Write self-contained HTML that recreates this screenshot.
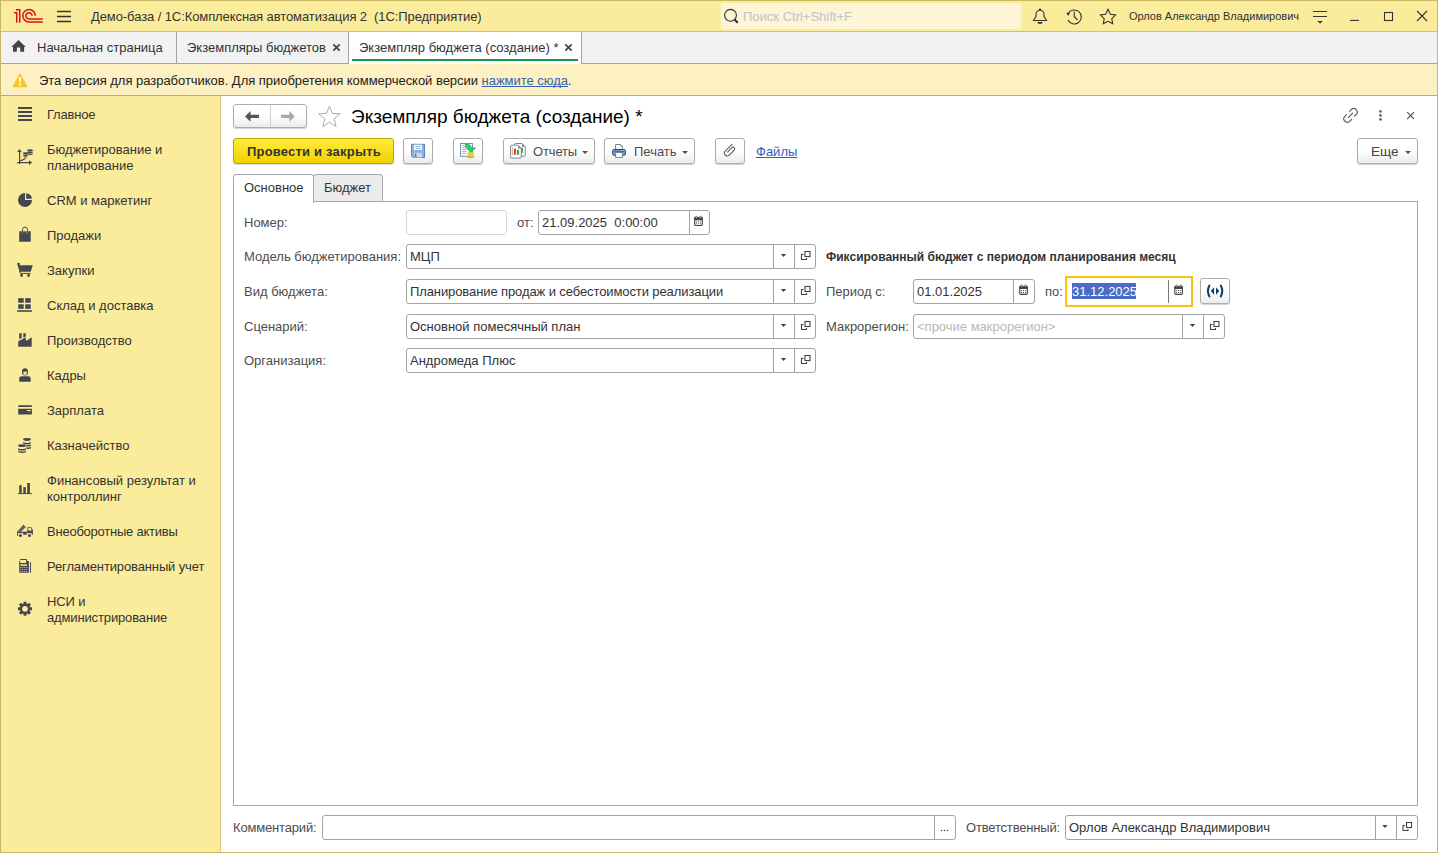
<!DOCTYPE html>
<html><head><meta charset="utf-8">
<style>
*{box-sizing:border-box;margin:0;padding:0}
html,body{width:1438px;height:853px;overflow:hidden;background:#fff;font-family:"Liberation Sans",sans-serif;font-size:13px;color:#333}
.a{position:absolute}
.t{position:absolute;white-space:nowrap;line-height:16px}
svg{position:absolute;overflow:visible}
#title{left:0;top:0;width:1438px;height:32px;background:#fbec9c;border-top:1px solid #c9b864;border-bottom:1px solid #d3c172}
#tabs{left:0;top:32px;width:1438px;height:32px;background:#f2f2f2;border-bottom:1px solid #a3a3a3}
#banner{left:0;top:64px;width:1438px;height:32px;background:#fdf1c3;border-bottom:1px solid #a9a9a9}
#side{left:0;top:96px;width:221px;height:757px;background:#fbec9c;border-right:1px solid #d8c878}
#wb{left:0;top:0;width:1438px;height:853px;border-left:1px solid #c7b766;border-right:1px solid #c7b766;border-bottom:1px solid #c7b766;pointer-events:none}
.si{position:absolute;left:47px;font-size:13px;color:#333;line-height:16px;white-space:nowrap}
.btn{position:absolute;border:1px solid #adadad;border-radius:3px;background:linear-gradient(#fff 0%,#fff 45%,#ececec 100%);box-shadow:0 1px 1px rgba(0,0,0,.18)}
.inp{position:absolute;border:1px solid #a3a3a3;border-radius:3px;background:#fff;height:25px}
.lbl{position:absolute;color:#4d4d4d;white-space:nowrap;line-height:16px}
.val{position:absolute;color:#333;white-space:nowrap;line-height:16px}
.t,.si,.lbl,.val{margin-top:1px}
#tabs .t{margin-top:0}
.sep{position:absolute;top:0;bottom:0;width:1px;background:#a3a3a3}
</style></head><body>

<!-- Title bar -->
<div id="title" class="a">
  <svg style="left:0;top:-1px" width="80" height="32" viewBox="0 0 80 32">
    <g fill="none" stroke="#d4141e" stroke-width="1.5">
      <path d="M14,12.75 H16.75 V22.75"/>
      <path d="M16,9.75 H19.75 V22.75"/>
      <path d="M35.3,15.8 A6.25,6.25 0 1 0 29,22 H42.8"/>
      <path d="M32.1,15.8 A3.1,3.1 0 1 0 29,18.9 H42.8"/>
    </g>
    <g stroke="#333" stroke-width="1.3">
      <path d="M57,11.5 H71 M57,16.5 H71 M57,21.5 H71"/>
    </g>
  </svg>
  <div class="t" style="left:91px;top:7px;color:#333;letter-spacing:-0.09px">Демо-база / 1С:Комплексная автоматизация 2&nbsp; (1С:Предприятие)</div>
  <div class="a" style="left:721px;top:2px;width:300px;height:26px;background:#fdf5d6;border-radius:2px"></div>
  <svg style="left:0;top:-1px" width="1438" height="32" viewBox="0 0 1438 32">
    <circle cx="730.5" cy="15.3" r="5.9" fill="none" stroke="#333" stroke-width="1.1"/>
    <path d="M734.6,19.5 L737.8,22.8" stroke="#333" stroke-width="2.2"/>
    <!-- bell -->
    <g fill="none" stroke="#333" stroke-width="1.1">
      <path d="M1033.5,20.5 H1046.5 L1044,16.5 V14.5 A4,4.3 0 0 0 1036,14.5 V16.5 Z"/>
    </g>
    <circle cx="1040" cy="9.6" r="1" fill="#333"/>
    <path d="M1037.4,22.1 H1042.6 A2.6,2 0 0 1 1037.4,22.1 Z" fill="#333"/>
    <!-- history -->
    <g fill="none" stroke="#333" stroke-width="1.1">
      <path d="M1068.2,13.5 A7,7 0 1 1 1068,20"/>
      <path d="M1074.2,11.5 V16.5 L1077.5,20"/>
    </g>
    <path d="M1066.2,12.8 L1070,12.6 L1068.3,16 Z" fill="#333"/>
    <!-- star -->
    <path d="M1108,9.3 L1110.4,14.2 L1115.6,14.9 L1111.8,18.6 L1112.7,23.8 L1108,21.3 L1103.3,23.8 L1104.2,18.6 L1100.4,14.9 L1105.6,14.2 Z" fill="none" stroke="#333" stroke-width="1.1" stroke-linejoin="miter"/>
    <!-- filter -->
    <path d="M1313,11.5 H1327 M1313,16.5 H1327" stroke="#333" stroke-width="1.1"/>
    <path d="M1317.2,21 H1323 L1320.1,23.6 Z" fill="#333"/>
    <!-- min max close -->
    <path d="M1350,20.4 H1359" stroke="#333" stroke-width="1.1"/>
    <rect x="1384.5" y="12.5" width="8" height="8" fill="none" stroke="#333" stroke-width="1.1"/>
    <path d="M1417,11 L1427,21 M1427,11 L1417,21" stroke="#333" stroke-width="1.1"/>
  </svg>
  <div class="t" style="left:743px;top:7px;color:#c2c2ca">Поиск Ctrl+Shift+F</div>
  <div class="t" style="left:1129px;top:6px;font-size:11px;color:#333">Орлов Александр Владимирович</div>
</div>

<!-- Tabs -->
<div id="tabs" class="a">
  <svg style="left:0;top:0" width="30" height="32" viewBox="0 32 30 32">
    <path d="M18.5,40 L11.3,47 H13 V51.8 H16.9 V47.5 H20.2 V51.8 H24.1 V47 H25.8 Z" fill="#444"/>
  </svg>
  <div class="t" style="left:37px;top:8px;color:#333">Начальная страница</div>
  <div class="a" style="left:176px;top:0;width:1px;height:31px;background:#a3a3a3"></div>
  <div class="t" style="left:187px;top:8px;color:#333">Экземпляры бюджетов</div>
  <svg style="left:0;top:0" width="600" height="32" viewBox="0 32 600 32">
    <path d="M333.3,44.3 L339.7,50.7 M339.7,44.3 L333.3,50.7" stroke="#444" stroke-width="1.7"/>
  </svg>
  <div class="a" style="left:348px;top:0;width:234px;height:32px;background:#fff;border-left:1px solid #a3a3a3;border-right:1px solid #a3a3a3"></div>
  <div class="t" style="left:359px;top:8px;color:#333">Экземпляр бюджета (создание) *</div>
  <svg style="left:0;top:0" width="600" height="32" viewBox="0 32 600 32">
    <path d="M565.3,44.3 L571.7,50.7 M571.7,44.3 L565.3,50.7" stroke="#444" stroke-width="1.7"/>
  </svg>
  <div class="a" style="left:352px;top:27px;width:226px;height:2px;background:#169a3c"></div>
</div>

<!-- Banner -->
<div id="banner" class="a">
  <svg style="left:0;top:0" width="40" height="32" viewBox="0 64 40 32">
    <path d="M20,73.2 L27.2,87 H12.8 Z" fill="#f6c623" stroke="#f6c623" stroke-width="0.6" stroke-linejoin="round"/>
    <rect x="19.1" y="77" width="1.8" height="5.3" fill="#fff"/>
    <rect x="19.1" y="83.5" width="1.8" height="1.8" fill="#fff"/>
  </svg>
  <div class="t" style="left:39px;top:8px;color:#222;letter-spacing:-0.03px">Эта версия для разработчиков. Для приобретения коммерческой версии <span style="color:#3462b4;text-decoration:underline;text-decoration-skip-ink:none">нажмите сюда</span>.</div>
</div>

<!-- Sidebar -->
<div id="side" class="a">
  <div class="si" style="top:10px;letter-spacing:-0.2px">Главное</div>
  <div class="si" style="top:45px">Бюджетирование и<br>планирование</div>
  <div class="si" style="top:96px">CRM и маркетинг</div>
  <div class="si" style="top:131px">Продажи</div>
  <div class="si" style="top:166px">Закупки</div>
  <div class="si" style="top:201px">Склад и доставка</div>
  <div class="si" style="top:236px">Производство</div>
  <div class="si" style="top:271px">Кадры</div>
  <div class="si" style="top:306px">Зарплата</div>
  <div class="si" style="top:341px">Казначейство</div>
  <div class="si" style="top:376px">Финансовый результат и<br>контроллинг</div>
  <div class="si" style="top:427px;letter-spacing:-0.23px">Внеоборотные активы</div>
  <div class="si" style="top:462px;letter-spacing:-0.13px">Регламентированный учет</div>
  <div class="si" style="top:497px;letter-spacing:-0.14px">НСИ и<br>администрирование</div>
</div>
<svg style="left:0;top:0" width="221" height="853" viewBox="0 0 221 853">
<g fill="#454750">
  <!-- Главное -->
  <rect x="18" y="107" width="14" height="2"/><rect x="18" y="111" width="14" height="2"/><rect x="18" y="115" width="14" height="2"/><rect x="18" y="119" width="14" height="2"/>
  <!-- budget -->
  <path d="M19.5,149 L17.2,152 H21.8 Z"/><rect x="19" y="151" width="1.2" height="13"/>
  <rect x="17" y="162" width="12.5" height="1.2"/><path d="M29,160.2 L32.2,162.6 L29,165 Z"/>
  <path d="M20.3,161 L21.3,160.4 H22 L23,159.5 H23.8 L24.6,158.7 H25.9" fill="none" stroke="#454750" stroke-width="1.1"/>
  <ellipse cx="25.5" cy="153.3" rx="2.7" ry="1.1"/><ellipse cx="25.5" cy="155.3" rx="2.7" ry="0.8"/><ellipse cx="25.5" cy="156.8" rx="2.3" ry="0.6"/>
  <ellipse cx="30" cy="150.4" rx="3" ry="1.1"/><ellipse cx="30" cy="152.4" rx="3" ry="0.8"/><ellipse cx="30" cy="154.3" rx="3" ry="0.8"/>
  <!-- CRM pie -->
  <path d="M25,193 V200 H32 A7,7 0 1 1 25,193 Z"/>
  <path d="M26.1,193.2 A5.8,5.8 0 0 1 31.9,198.8 H26.1 Z"/>
  <!-- bag -->
  <path d="M19.2,231.2 H21.8 V233.2 H23.2 V231.2 H26.4 V233.2 H27.8 V231.2 H30.7 V241.7 H19.2 Z"/>
  <path d="M22.5,233 V229.4 A2.45,2.3 0 0 1 27.4,229.4 V233" fill="none" stroke="#454750" stroke-width="1"/>
  <!-- cart -->
  <path d="M17,263 H19.8 V265.3 H32.8 L30.7,271.7 H19.5 Z"/>
  <path d="M19.7,271 L20.3,273.4 H30.7" fill="none" stroke="#454750" stroke-width="1"/>
  <circle cx="21.6" cy="275.5" r="1.4"/><circle cx="28.6" cy="275.5" r="1.4"/>
  <!-- warehouse -->
  <rect x="18.2" y="298.2" width="5.5" height="4.5"/><rect x="25.2" y="298.2" width="5.5" height="4.5"/>
  <rect x="18.2" y="304.3" width="5.5" height="4.5"/><rect x="25.2" y="304.3" width="5.5" height="4.5"/>
  <rect x="17.1" y="310.2" width="14.8" height="1.6"/>
  <!-- factory -->
  <path d="M19.2,333.2 H21.7 V338 L19.2,339 Z"/><path d="M23.3,333.2 H25.8 V336.4 L23.3,337.5 Z"/>
  <path d="M18.2,341.2 L25.7,337.3 L26.1,341 L31.7,337.2 V346.7 H18.2 Z"/>
  <!-- person -->
  <path d="M22.1,371.5 A2.9,3.3 0 0 1 27.9,371.5 V373 A2.9,2.5 0 0 1 22.1,373 Z"/>
  <path d="M19.2,381.7 V378.2 A2.5,2 0 0 1 21.5,376.2 H28.4 A2.5,2 0 0 1 30.7,378.2 V381.7 Z"/>
  <!-- card -->
  <rect x="18.2" y="405.2" width="13.7" height="1.8" rx="0.6"/>
  <path d="M18.2,408.8 H31.9 V414 A0.6,0.6 0 0 1 31.3,414.6 H18.8 A0.6,0.6 0 0 1 18.2,414 Z"/>
  <!-- coins -->
  <ellipse cx="27" cy="439.5" rx="3.9" ry="1.4"/><path d="M23.1,441.6 A3.9,1.3 0 0 0 30.9,441.6 V443 A3.9,1.3 0 0 1 23.1,443 Z"/>
  <path d="M26.3,444.8 A3.9,1.3 0 0 0 30.9,444.6 V446 A3.9,1.3 0 0 1 26.3,446.3 Z"/><path d="M26.3,447.3 A3.9,1.3 0 0 0 30.9,447.1 V448.5 A3.9,1.3 0 0 1 26.3,448.8 Z"/>
  <ellipse cx="22" cy="445.7" rx="3.95" ry="1.4"/><path d="M18,447.8 A3.95,1.3 0 0 0 26,447.8 V449.2 A3.95,1.3 0 0 1 18,449.2 Z"/>
  <path d="M18,450.3 A3.95,1.3 0 0 0 26,450.3 V451.6 A3.95,1.3 0 0 1 18,451.6 Z"/>
  <!-- chart -->
  <rect x="19.2" y="485.2" width="2.5" height="8.3"/><rect x="23.3" y="487.1" width="2.5" height="6.4"/><rect x="27.2" y="483" width="2.7" height="10.5"/>
  <rect x="18" y="493.1" width="13.9" height="1"/>
  <!-- truck -->
  <path d="M17.35,531.4 L23.55,524.5 L25.8,527.3 L20.45,532 Z" opacity="0.85"/>
  <path d="M27.35,527.2 H31.4 L32.85,530 V533.1 H27.35 Z"/>
  <path d="M28.3,528.1 H30.9 L31.8,530.6 H28.3 Z" fill="#fbec9c"/>
  <rect x="17.2" y="531.7" width="15.65" height="1.4"/>
  <rect x="23.3" y="533" width="3.35" height="1.8"/>
  <rect x="31.6" y="533" width="1.25" height="1.8"/>
  <rect x="17.2" y="531.4" width="0.9" height="4.5"/>
  <circle cx="20.45" cy="535.6" r="1.5"/><circle cx="29.45" cy="535.6" r="1.5"/>
  <!-- calc -->
  <path d="M19.2,561 H20.2 V559 H26.9 V561 H28.9 V572.7 H19.2 Z"/>
  <rect x="30" y="562.2" width="1" height="10.5"/>
  <!-- gear -->
  <path d="M23.43,603.74 L23.57,601.74 L26.43,601.74 L26.57,603.74 L27.47,604.11 L28.98,602.80 L31.00,604.82 L29.69,606.33 L30.06,607.23 L32.06,607.37 L32.06,610.23 L30.06,610.37 L29.69,611.27 L31.00,612.78 L28.98,614.80 L27.47,613.49 L26.57,613.86 L26.43,615.86 L23.57,615.86 L23.43,613.86 L22.53,613.49 L21.02,614.80 L19.00,612.78 L20.31,611.27 L19.94,610.37 L17.94,610.23 L17.94,607.37 L19.94,607.23 L20.31,606.33 L19.00,604.82 L21.02,602.80 L22.53,604.11 Z"/>
</g>
<g fill="#fbec9c">
  <path d="M20.2,560 H26 V563 H20.2 Z" fill="#fbec9c"/>
  <rect x="20.3" y="564.3" width="6.6" height="1.5"/>
  <circle cx="20.8" cy="567.5" r="0.55"/><circle cx="22.8" cy="567.5" r="0.55"/><circle cx="24.8" cy="567.5" r="0.55"/><circle cx="26.8" cy="567.5" r="0.55"/>
  <circle cx="20.8" cy="569.5" r="0.55"/><circle cx="22.8" cy="569.5" r="0.55"/><circle cx="24.8" cy="569.5" r="0.55"/><circle cx="26.8" cy="569.5" r="0.55"/>
  <circle cx="20.8" cy="571.5" r="0.55"/><circle cx="22.8" cy="571.5" r="0.55"/><circle cx="24.8" cy="571.5" r="0.55"/><circle cx="26.8" cy="571.5" r="0.55"/>
  <circle cx="25" cy="608.8" r="2.9"/>
  <rect x="26.9" y="410" width="4" height="1.1"/>
  <path d="M23.2,373 A1.8,2 0 0 0 26.8,373 V371.8 Q25,371 23.2,372.4 Z"/>
</g>
</svg>


<!-- nav buttons -->
<div class="btn" style="left:233px;top:104px;width:74px;height:24px"></div>
<div class="a" style="left:270px;top:105px;width:1px;height:22px;background:#d0d0d0"></div>
<svg style="left:0;top:0" width="1438" height="853" viewBox="0 0 1438 853">
  <path d="M245,116.4 L250.5,111 V114.8 H259 V118 H250.5 V121.8 Z" fill="#555"/>
  <path d="M294.8,116.4 L289.3,111 V114.8 H281 V118 H289.3 V121.8 Z" fill="#aaa"/>
  <path d="M329.45,106.00 L332.33,113.34 L340.20,113.81 L334.11,118.81 L336.09,126.44 L329.45,122.20 L322.81,126.44 L324.79,118.81 L318.70,113.81 L326.57,113.34 Z" fill="none" stroke="#a7afba" stroke-width="1" stroke-linejoin="miter"/>
  <!-- link icon -->
  <g fill="none" stroke="#555" stroke-width="1.1" stroke-linecap="round">
    <path d="M1349.5,111.5 L1351.35,109.50 A3.54,3.54 0 0 1 1356.35,114.50 L1354.4,116.2"/>
    <path d="M1351.6,119.3 L1349.75,121.35 A3.54,3.54 0 0 1 1344.75,116.35 L1346.6,114.6"/>
    <path d="M1348.4,117.6 L1352.7,113.2"/>
  </g>
  <circle cx="1380.5" cy="111.4" r="1.35" fill="#666"/><circle cx="1380.5" cy="115.4" r="1.35" fill="#666"/><circle cx="1380.5" cy="119.4" r="1.35" fill="#666"/>
  <path d="M1407.2,112.2 L1414,119 M1414,112.2 L1407.2,119" stroke="#555" stroke-width="1.15"/>
</svg>
<div class="t" style="left:351px;top:105px;font-size:19px;line-height:22px;color:#000">Экземпляр бюджета (создание) *</div>

<!-- toolbar -->
<div class="btn" style="left:233px;top:138px;width:161px;height:26px;background:linear-gradient(#ffed3a,#f3d000);border-color:#bfa200;box-shadow:0 1px 1px rgba(0,0,0,.12)"></div>
<div class="t" style="left:247px;top:143px;font-weight:bold;color:#333;letter-spacing:0.2px">Провести и закрыть</div>
<div class="btn" style="left:403px;top:138px;width:30px;height:26px"></div>
<div class="btn" style="left:453px;top:138px;width:30px;height:26px"></div>
<div class="btn" style="left:503px;top:138px;width:92px;height:26px"></div>
<div class="btn" style="left:604px;top:138px;width:91px;height:26px"></div>
<div class="btn" style="left:715px;top:138px;width:30px;height:26px"></div>
<div class="btn" style="left:1357px;top:138px;width:61px;height:26px"></div>
<div class="t" style="left:533px;top:143px;color:#4d4d4d;letter-spacing:-0.15px">Отчеты</div>
<div class="t" style="left:634px;top:143px;color:#4d4d4d">Печать</div>
<div class="t" style="left:756px;top:143px;color:#2d5fc0;text-decoration:underline;text-decoration-skip-ink:none">Файлы</div>
<div class="t" style="left:1371px;top:143px;color:#444;font-size:13.6px;-webkit-font-smoothing:antialiased">Еще</div>
<svg style="left:0;top:0" width="1438" height="853" viewBox="0 0 1438 853">
  <!-- floppy -->
  <path d="M411.5,144.3 H424.5 V157.5 H413 L411.5,156 Z" fill="#8bb3e3" stroke="#4a78b8" stroke-width="0.9"/>
  <rect x="413.9" y="144.7" width="8.1" height="5.3" fill="#fff"/>
  <path d="M415.2,146.4 H420.8 M415.2,148.3 H420.8" stroke="#7a9fd0" stroke-width="0.8"/>
  <rect x="413.9" y="152.8" width="8.1" height="4.7" fill="#c9d3dc"/>
  <path d="M417.5,153.3 V157 M419.5,153.3 V157" stroke="#e6ebef" stroke-width="0.6"/>
  <rect x="414.9" y="153.6" width="1.5" height="3.4" fill="#4a78b8"/>
  <!-- doc with arrow & coins -->
  <rect x="460.5" y="143.5" width="12" height="12.8" fill="#fff" stroke="#7388a8" stroke-width="0.9"/>
  <path d="M462.3,145.4 H464.2 M462.3,147.3 H466.3 M462.3,149.4 H466.3 M462.3,151.4 H466.3 M462.3,153.4 H466.3" stroke="#7f93b3" stroke-width="0.75"/>
  <ellipse cx="470.7" cy="156.8" rx="3.3" ry="1.5" fill="#d9b83a"/>
  <ellipse cx="470.7" cy="155" rx="3.3" ry="1.4" fill="#f2dc62"/>
  <ellipse cx="470.7" cy="153.3" rx="3.3" ry="1.3" fill="#e8c845"/>
  <path d="M466.5,155 H474 M466.5,156.8 H474" stroke="#c9a42a" stroke-width="0.4"/>
  <path d="M465.3,144 Q470.5,143.5 471.5,147.9 H475.7 L470.7,152.2 L466.2,147.9 H468.8 Q468.4,146.3 465.3,146.6 Z" fill="#24d46c" stroke="#17a04c" stroke-width="0.7" stroke-linejoin="round"/>
  <!-- reports -->
  <path d="M514.7,147 V144.3 A0.8,0.8 0 0 1 515.5,143.5 H522 L525.3,146.8 V155.3 A0.8,0.8 0 0 1 524.5,156.1 H521.5" fill="#fff" stroke="#6f8294" stroke-width="0.95"/>
  <path d="M522,143.5 V146.8 H525.3 Z" fill="#7d8d9c"/>
  <rect x="521" y="147.7" width="1.9" height="4.4" fill="#3a9a2a"/>
  <path d="M521,152.5 H523.5" stroke="#777" stroke-width="0.6"/>
  <path d="M510.6,146 A0.8,0.8 0 0 1 511.4,145.2 H518 L521.3,148.5 V157.3 A0.8,0.8 0 0 1 520.5,158.1 H511.4 A0.8,0.8 0 0 1 510.6,157.3 Z" fill="#fff" stroke="#6f8294" stroke-width="0.95"/>
  <path d="M518,145.2 V148.5 H521.3 Z" fill="#7d8d9c"/>
  <path d="M512.4,147.2 V154.6 H519.7" fill="none" stroke="#888" stroke-width="0.6"/>
  <rect x="513.9" y="148.8" width="2" height="5.4" fill="#e8301c"/>
  <rect x="517" y="149.9" width="1.9" height="4.3" fill="#3aa42a"/>
  <path d="M582.1,151 H588 L585.05,154.1 Z" fill="#4d4d4d"/>
  <!-- printer -->
  <path d="M615.6,149 V144.5 H620.7 L622.4,146.3 V149" fill="#fff" stroke="#6d7f90" stroke-width="0.95"/>
  <path d="M620.5,144.4 V146.4 H622.5 Z" fill="#6d7f90"/>
  <rect x="612.6" y="149.5" width="12.8" height="5.8" rx="1.5" fill="#79a3d2" stroke="#244f7a" stroke-width="1"/>
  <path d="M614.2,151.3 H624" stroke="#2f5a85" stroke-width="0.9"/>
  <circle cx="621.4" cy="150.6" r="0.45" fill="#fff"/><circle cx="623.5" cy="150.6" r="0.45" fill="#fff"/>
  <rect x="615.6" y="152.4" width="6.8" height="5" fill="#fff" stroke="#6d7f90" stroke-width="0.95"/>
  <path d="M682.1,151 H688 L685.05,154.1 Z" fill="#4d4d4d"/>
  <!-- clip -->
  <path d="M732.00,144.30 L725.15,151.15 A2.83,2.83 0 0 0 729.15,155.15 L734.25,150.05 A1.66,1.66 0 0 0 731.90,147.70 L727.55,152.05" fill="none" stroke="#5c5c5c" stroke-width="1.05" stroke-linecap="round"/>
  <path d="M1405.1,151 H1411 L1408.05,154.1 Z" fill="#4d4d4d"/>
</svg>

<!-- tabs -->
<div class="a" style="left:233px;top:201px;width:1185px;height:605px;border:1px solid #a8a8a8"></div>
<div class="a" style="left:313px;top:174px;width:70px;height:28px;background:#ebebeb;border:1px solid #a8a8a8;border-radius:3px 3px 0 0"></div>
<div class="a" style="left:233px;top:174px;width:81px;height:29px;background:#fff;border:1px solid #a8a8a8;border-bottom:none;border-radius:3px 3px 0 0"></div>
<div class="t" style="left:244px;top:179px;color:#333">Основное</div>
<div class="t" style="left:324px;top:179px;color:#333">Бюджет</div>

<!-- labels -->
<div class="lbl" style="left:244px;top:214px">Номер:</div>
<div class="lbl" style="left:517px;top:214px">от:</div>
<div class="lbl" style="left:244px;top:248px">Модель бюджетирования:</div>
<div class="lbl" style="left:244px;top:283px">Вид бюджета:</div>
<div class="lbl" style="left:244px;top:318px">Сценарий:</div>
<div class="lbl" style="left:244px;top:352px">Организация:</div>
<div class="t" style="left:826px;top:248px;font-weight:bold;font-size:12px;color:#333">Фиксированный бюджет с периодом планирования месяц</div>
<div class="lbl" style="left:826px;top:283px">Период с:</div>
<div class="lbl" style="left:1045px;top:283px">по:</div>
<div class="lbl" style="left:826px;top:318px">Макрорегион:</div>

<!-- inputs -->
<div class="inp" style="left:406px;top:210px;width:101px;border-color:#d6d6d6"></div>
<div class="inp" style="left:538px;top:210px;width:172px"><div class="sep" style="left:150px"></div></div>
<div class="val" style="left:542px;top:214px">21.09.2025&nbsp; 0:00:00</div>

<div class="inp" style="left:406px;top:244px;width:410px"><div class="sep" style="left:366px"></div><div class="sep" style="left:387px"></div></div>
<div class="val" style="left:410px;top:248px">МЦП</div>
<div class="inp" style="left:406px;top:279px;width:410px"><div class="sep" style="left:366px"></div><div class="sep" style="left:387px"></div></div>
<div class="val" style="left:410px;top:283px;letter-spacing:-0.1px">Планирование продаж и себестоимости реализации</div>
<div class="inp" style="left:406px;top:314px;width:410px"><div class="sep" style="left:366px"></div><div class="sep" style="left:387px"></div></div>
<div class="val" style="left:410px;top:318px">Основной помесячный план</div>
<div class="inp" style="left:406px;top:348px;width:410px"><div class="sep" style="left:366px"></div><div class="sep" style="left:387px"></div></div>
<div class="val" style="left:410px;top:352px">Андромеда Плюс</div>

<div class="inp" style="left:913px;top:279px;width:122px"><div class="sep" style="left:99px"></div></div>
<div class="val" style="left:917px;top:283px">01.01.2025</div>
<div class="a" style="left:1065px;top:276px;width:128px;height:31px;border:2px solid #f7c312;background:#fff"></div>
<div class="a" style="left:1168px;top:280px;width:1px;height:23px;background:#777"></div>
<div class="a" style="left:1072px;top:282.5px;width:64px;height:16px;background:#4a6bc7"></div>
<div class="val" style="left:1072px;top:283px;color:#fff">31.12.2025</div>
<div class="btn" style="left:1200px;top:278px;width:30px;height:26px"></div>
<div class="inp" style="left:913px;top:314px;width:312px"><div class="sep" style="left:268px"></div><div class="sep" style="left:289px"></div></div>
<div class="val" style="left:917px;top:318px;color:#b8b8b8">&lt;прочие макрорегион&gt;</div>

<!-- bottom -->
<div class="lbl" style="left:233px;top:819px;letter-spacing:-0.17px">Комментарий:</div>
<div class="inp" style="left:322px;top:815px;width:634px"><div class="sep" style="left:611px"></div></div>
<div class="lbl" style="left:966px;top:819px;letter-spacing:-0.18px">Ответственный:</div>
<div class="inp" style="left:1065px;top:815px;width:353px"><div class="sep" style="left:309px"></div><div class="sep" style="left:330px"></div></div>
<div class="val" style="left:1069px;top:819px">Орлов Александр Владимирович</div>
<svg style="left:0;top:0" width="1438" height="853" viewBox="0 0 1438 853"><circle cx="941.5" cy="830.5" r="0.75" fill="#444"/><circle cx="944.5" cy="830.5" r="0.75" fill="#444"/><circle cx="947.5" cy="830.5" r="0.75" fill="#444"/></svg>

<svg style="left:0;top:0" width="1438" height="853" viewBox="0 0 1438 853" id="fieldicons">
<path d="M780.8,254.1 H786.2 L783.5,257.1 Z" fill="#444"/>
<g fill="none" stroke="#444" stroke-width="1.1"><rect x="805" y="251.5" width="5" height="5"/><path d="M803.5,254.5 H801.5 V259.5 H806.5 V258.0"/></g>
<path d="M780.8,289.1 H786.2 L783.5,292.1 Z" fill="#444"/>
<g fill="none" stroke="#444" stroke-width="1.1"><rect x="805" y="286.5" width="5" height="5"/><path d="M803.5,289.5 H801.5 V294.5 H806.5 V293.0"/></g>
<path d="M780.8,324.1 H786.2 L783.5,327.1 Z" fill="#444"/>
<g fill="none" stroke="#444" stroke-width="1.1"><rect x="805" y="321.5" width="5" height="5"/><path d="M803.5,324.5 H801.5 V329.5 H806.5 V328.0"/></g>
<path d="M780.8,358.1 H786.2 L783.5,361.1 Z" fill="#444"/>
<g fill="none" stroke="#444" stroke-width="1.1"><rect x="805" y="355.5" width="5" height="5"/><path d="M803.5,358.5 H801.5 V363.5 H806.5 V362.0"/></g>
<path d="M1189.8,324.1 H1195.2 L1192.5,327.1 Z" fill="#444"/>
<g fill="none" stroke="#444" stroke-width="1.1"><rect x="1214" y="321.5" width="5" height="5"/><path d="M1212.5,324.5 H1210.5 V329.5 H1215.5 V328.0"/></g>
<path d="M1382.3,825.1 H1387.7 L1385,828.1 Z" fill="#444"/>
<g fill="none" stroke="#444" stroke-width="1.1"><rect x="1406.5" y="822.5" width="5" height="5"/><path d="M1405.0,825.5 H1403.0 V830.5 H1408.0 V829.0"/></g>

<g><rect x="694.65" y="217.65" width="7.6" height="7.9" rx="1" fill="#fff" stroke="#444" stroke-width="1.1"/><rect x="694.1" y="217.1" width="8.7" height="3.1" rx="0.8" fill="#444"/><circle cx="696.40" cy="221.80" r="0.62" fill="#444"/><circle cx="696.40" cy="223.75" r="0.62" fill="#444"/><circle cx="698.45" cy="221.80" r="0.62" fill="#444"/><circle cx="698.45" cy="223.75" r="0.62" fill="#444"/><circle cx="700.50" cy="221.80" r="0.62" fill="#444"/><circle cx="700.50" cy="223.75" r="0.62" fill="#444"/><circle cx="696.40" cy="217.20" r="0.95" fill="#fff" stroke="#444" stroke-width="0.8"/><circle cx="700.50" cy="217.20" r="0.95" fill="#fff" stroke="#444" stroke-width="0.8"/></g>
<g><rect x="1019.75" y="286.45" width="7.6" height="7.9" rx="1" fill="#fff" stroke="#444" stroke-width="1.1"/><rect x="1019.2" y="285.9" width="8.7" height="3.1" rx="0.8" fill="#444"/><circle cx="1021.50" cy="290.60" r="0.62" fill="#444"/><circle cx="1021.50" cy="292.55" r="0.62" fill="#444"/><circle cx="1023.55" cy="290.60" r="0.62" fill="#444"/><circle cx="1023.55" cy="292.55" r="0.62" fill="#444"/><circle cx="1025.60" cy="290.60" r="0.62" fill="#444"/><circle cx="1025.60" cy="292.55" r="0.62" fill="#444"/><circle cx="1021.50" cy="286.00" r="0.95" fill="#fff" stroke="#444" stroke-width="0.8"/><circle cx="1025.60" cy="286.00" r="0.95" fill="#fff" stroke="#444" stroke-width="0.8"/></g>
<g><rect x="1174.85" y="286.45" width="7.6" height="7.9" rx="1" fill="#fff" stroke="#444" stroke-width="1.1"/><rect x="1174.3" y="285.9" width="8.7" height="3.1" rx="0.8" fill="#444"/><circle cx="1176.60" cy="290.60" r="0.62" fill="#444"/><circle cx="1176.60" cy="292.55" r="0.62" fill="#444"/><circle cx="1178.65" cy="290.60" r="0.62" fill="#444"/><circle cx="1178.65" cy="292.55" r="0.62" fill="#444"/><circle cx="1180.70" cy="290.60" r="0.62" fill="#444"/><circle cx="1180.70" cy="292.55" r="0.62" fill="#444"/><circle cx="1176.60" cy="286.00" r="0.95" fill="#fff" stroke="#444" stroke-width="0.8"/><circle cx="1180.70" cy="286.00" r="0.95" fill="#fff" stroke="#444" stroke-width="0.8"/></g>
<g fill="none" stroke="#0c3d6b" stroke-width="2" stroke-linecap="round"><path d="M1209.4,285.6 Q1206.4,291 1209.4,296.4"/><path d="M1220.8,285.6 Q1223.8,291 1220.8,296.4"/></g>
<path d="M1214.1,287.2 L1210.8,291 L1214.1,294.7 Z M1216,287.2 L1219.2,291 L1216,294.7 Z" fill="#0c3d6b"/>
</svg>


<div id="wb" class="a"></div>
</body></html>
